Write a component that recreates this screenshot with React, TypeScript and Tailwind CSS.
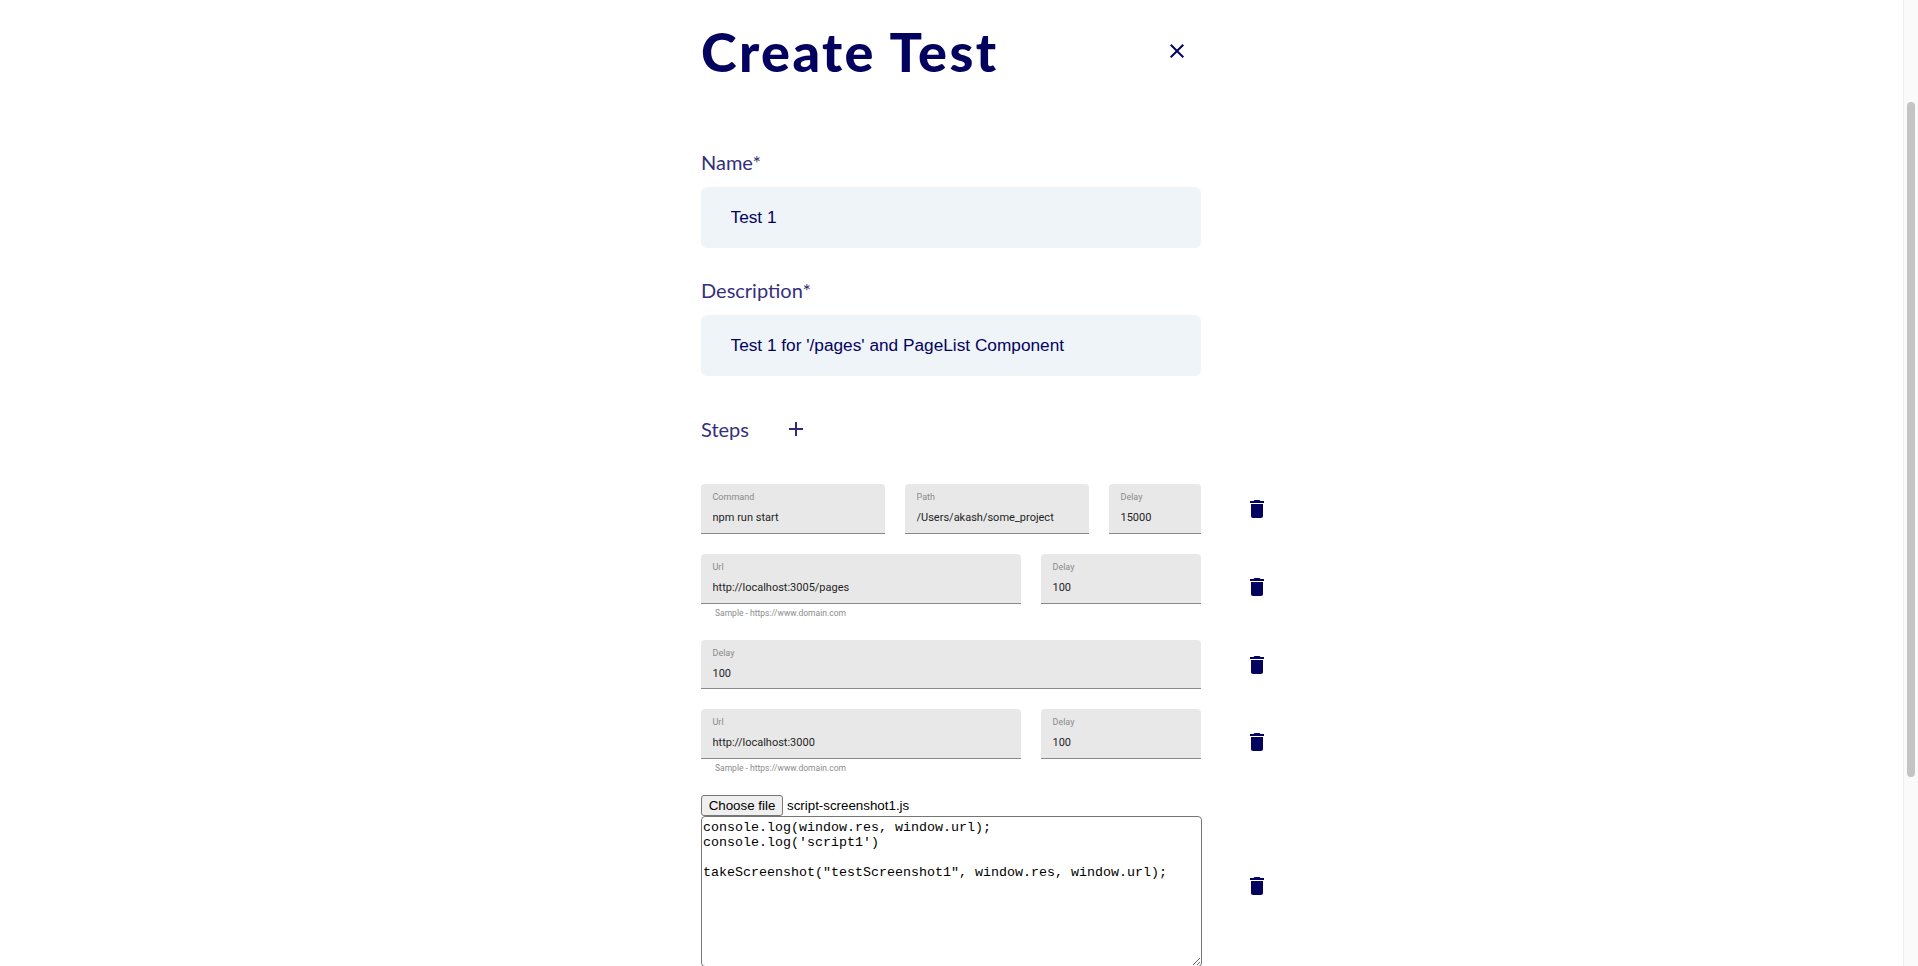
const navy = "text-[#04025f]";

function CloseIcon() {
  return (
    <svg viewBox="0 0 24 24" className={`w-6 h-6 fill-current ${navy}`}>
      <path d="M19 6.41L17.59 5 12 10.59 6.41 5 5 6.41 10.59 12 5 17.59 6.41 19 12 13.41 17.59 19 19 17.59 13.41 12z" />
    </svg>
  );
}

function AddIcon() {
  return (
    <svg viewBox="0 0 24 24" className="w-6 h-6 fill-current text-[#2f2a7c]">
      <path d="M19 13h-6v6h-2v-6H5v-2h6V5h2v6h6v2z" />
    </svg>
  );
}

function DeleteIcon() {
  return (
    <svg viewBox="0 0 24 24" className={`w-6 h-6 shrink-0 ml-[44px] fill-current ${navy}`}>
      <path d="M6 19c0 1.1.9 2 2 2h8c1.1 0 2-.9 2-2V7H6v12zM19 4h-3.5l-1-1h-5l-1 1H5v2h14V4z" />
    </svg>
  );
}

function TextField({ label, value, helper, short }: { label: string; value: string; helper?: string; short?: boolean }) {
  return (
    <div className="min-w-0">
      <div className={`bg-[#e8e8e8] rounded-t border-b border-[#8a8a8a] pt-2 pl-[11.5px] pr-3 ${short ? "h-[49px]" : "h-[50px]"}`}>
        <label className="block text-[9px] leading-[10px] text-[#8a8a8a] font-['Roboto',sans-serif]">{label}</label>
        <input
          readOnly
          defaultValue={value}
          className="block w-full mt-2 h-4 text-[11px] text-[#1f1f1f] bg-transparent outline-none font-['Roboto',sans-serif]"
        />
      </div>
      {helper && (
        <p className="h-4 pt-px pl-[14px] text-[8.5px] leading-4 text-[#8c8c8c] font-['Roboto',sans-serif]">{helper}</p>
      )}
    </div>
  );
}

function FormField({ label, value, className }: { label: string; value: string; className?: string }) {
  return (
    <div className={className}>
      <label className="block h-7 mb-2.5 text-[20px] leading-[26px] text-[#352f7c] font-['Lato',sans-serif]">{label}</label>
      <input
        readOnly
        defaultValue={value}
        className={`block w-[500px] h-[61px] px-[29.5px] rounded-md bg-[#eff4f9] outline-none text-[17.25px] ${navy} font-['Liberation_Sans',sans-serif]`}
      />
    </div>
  );
}

const sample = "Sample - https://www.domain.com";
const script = `console.log(window.res, window.url);
console.log('script1')

takeScreenshot("testScreenshot1", window.res, window.url);`;

export default function App() {
  return (
    <div className="flex h-screen overflow-hidden bg-white">
      <main className="flex-1 min-w-0">
        <div className="mx-auto w-[501px]">
          <header className="flex items-center justify-between w-[488px] h-[102px]">
            <h1 className={`text-[54px] font-black tracking-[2.4px] ${navy} font-['Lato',sans-serif]`}>Create Test</h1>
            <CloseIcon />
          </header>

          <FormField className="mt-[47px]" label="Name*" value="Test 1" />
          <FormField className="mt-[29px]" label="Description*" value="Test 1 for '/pages' and PageList Component" />

          <div className="flex items-center gap-[35px] mt-[41px] h-6">
            <span className="pb-px text-[20px] text-[#352f7c] font-['Lato',sans-serif]">Steps</span>
            <AddIcon />
          </div>

          <div className="flex flex-col gap-5 mt-[43px] w-[568px]">
            <div className="flex items-center">
              <div className="grid grid-cols-[2fr_2fr_1fr] gap-5 w-[500px]">
                <TextField label="Command" value="npm run start" />
                <TextField label="Path" value="/Users/akash/some_project" />
                <TextField label="Delay" value="15000" />
              </div>
              <DeleteIcon />
            </div>

            <div className="flex items-center">
              <div className="grid grid-cols-[2fr_1fr] gap-5 w-[500px]">
                <TextField label="Url" value="http://localhost:3005/pages" helper={sample} />
                <TextField label="Delay" value="100" />
              </div>
              <DeleteIcon />
            </div>

            <div className="flex items-center">
              <div className="w-[500px]">
                <TextField label="Delay" value="100" short />
              </div>
              <DeleteIcon />
            </div>

            <div className="flex items-center">
              <div className="grid grid-cols-[2fr_1fr] gap-5 w-[500px]">
                <TextField label="Url" value="http://localhost:3000" helper={sample} />
                <TextField label="Delay" value="100" />
              </div>
              <DeleteIcon />
            </div>

            <div className="flex items-center">
              <div className="w-[501px] -mr-px pb-2.5">
                <div className="flex items-center h-[21px] text-[13.33px] text-black font-['Liberation_Sans',sans-serif]">
                  <button className="h-[21px] w-[82px] shrink-0 bg-[#efefef] border border-[#767676] rounded-[3px]">Choose file</button>
                  <span className="ml-1">script-screenshot1.js</span>
                </div>
                <textarea
                  readOnly
                  defaultValue={script}
                  className="block w-[501px] h-[151px] pt-[3px] pb-0.5 pl-px pr-0.5 bg-white border border-[#767676] rounded-sm outline-none text-[13.33px] leading-[15px] text-black font-['Liberation_Mono',monospace] whitespace-pre"
                />
              </div>
              <DeleteIcon />
            </div>
          </div>
        </div>
      </main>

      <aside className="w-[15px] h-full bg-[#fafafa] border-l border-[#efefef]">
        <div className="mx-[3px] mt-[102px] h-[675px] bg-[#c4c4c4] rounded-sm" />
      </aside>
    </div>
  );
}
